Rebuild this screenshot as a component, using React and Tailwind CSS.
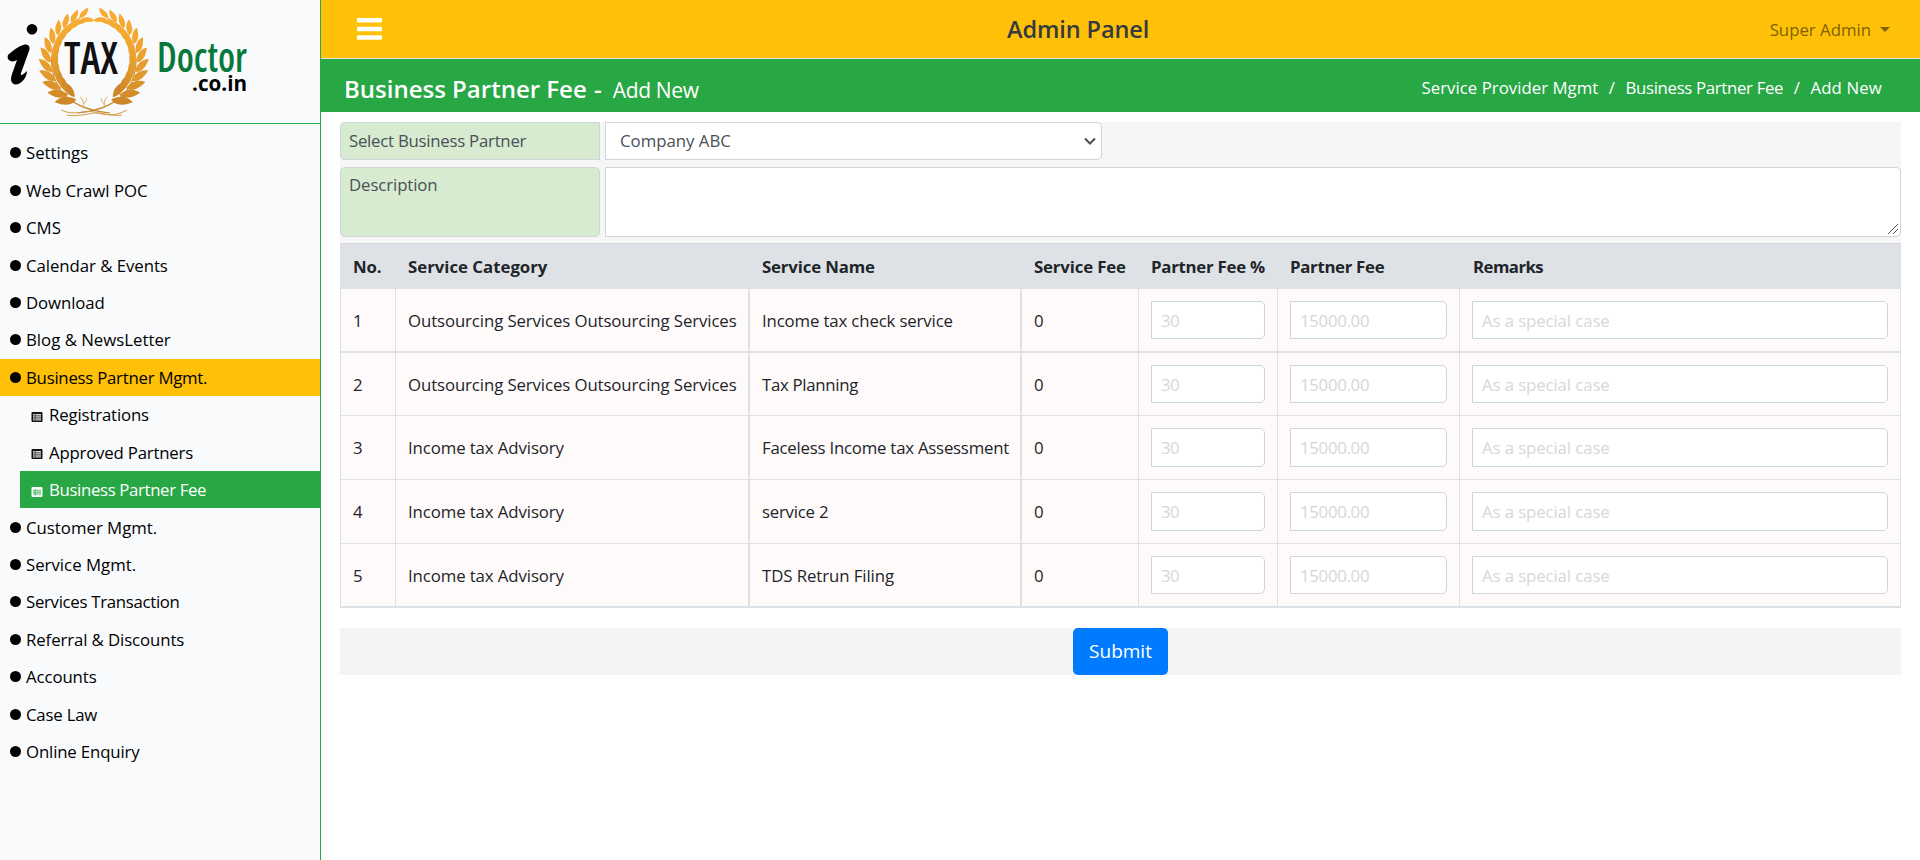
import React from "react";

const MENU = [
  { label: "Settings" },
  { label: "Web Crawl POC", fit: "tracking-[0px]" },
  { label: "CMS" },
  { label: "Calendar & Events", fit: "tracking-[-0.05px]" },
  { label: "Download", fit: "tracking-[-0.1px]" },
  { label: "Blog & NewsLetter" },
  {
    label: "Business Partner Mgmt.",
    fit: "tracking-[-0.25px]",
    open: true,
    children: [
      { label: "Registrations", fit: "tracking-[-0.15px]" },
      { label: "Approved Partners", fit: "tracking-[-0.2px]" },
      { label: "Business Partner Fee", fit: "tracking-[-0.35px]", active: true },
    ],
  },
  { label: "Customer Mgmt." },
  { label: "Service Mgmt." },
  { label: "Services Transaction", fit: "tracking-[-0.3px]" },
  { label: "Referral & Discounts", fit: "tracking-[-0.1px]" },
  { label: "Accounts", fit: "tracking-[-0.1px]" },
  { label: "Case Law", fit: "tracking-[-0.2px]" },
  { label: "Online Enquiry", fit: "tracking-[-0.15px]" },
];

const ROWS = [
  { category: "Outsourcing Services Outsourcing Services", name: "Income tax check service", fit: "tracking-[-0.14px]", row: "h-16 border-b-2", input: "h-[38px]" },
  { category: "Outsourcing Services Outsourcing Services", name: "Tax Planning", fit: "tracking-[-0.3px]", row: "h-[63px] border-b", input: "h-[38px]" },
  { category: "Income tax Advisory", name: "Faceless Income tax Assessment", fit: "tracking-[-0.22px]", row: "h-16 border-b", input: "h-[39px]" },
  { category: "Income tax Advisory", name: "service 2", fit: "tracking-[-0.22px]", row: "h-16 border-b", input: "h-[39px]" },
  { category: "Income tax Advisory", name: "TDS Retrun Filing", fit: "tracking-[-0.08px]", row: "h-16 border-b-2", input: "h-[38px]" },
];

const GRID = "grid grid-cols-[56px_354px_272px_117px_139px_182px_441px]";

/* Leaves of one laurel branch, from the foot of the wreath up to its tip. */
const LEAF_COLORS = ["#cd8726", "#d38c28", "#da922a", "#e1982c", "#e79d2d", "#eca12e", "#f0a42f", "#f3a730", "#f5a931", "#f6aa32", "#f7ab33", "#f8ac34"];
const LEAVES = LEAF_COLORS.map((color, i) => {
  const t = i / (LEAF_COLORS.length - 1);
  const a = ((114 + t * 137) * Math.PI) / 180;
  return {
    x: 93.5 + 42 * Math.cos(a),
    y: 59.5 + 43 * Math.sin(a),
    dir: (Math.atan2(43 * Math.cos(a), -42 * Math.sin(a)) * 180) / Math.PI,
    s: 1.15 - t * 0.42,
    color,
  };
});

function Branch() {
  return (
    <g>
      <path d="M110 113C88 111 68 103 59 88C46 66 48 34 80 18" fill="none" stroke="url(#gold)" strokeWidth="1.2" />
      {LEAVES.map((l, i) => (
        <g key={i} transform={`translate(${l.x} ${l.y}) rotate(${l.dir}) scale(${l.s})`} fill={l.color}>
          <path d="M0 -0.500C0 -6 6 -10 16 -10.500C14 -4 8 0 0 -0.500Z" />
          <path d="M2 0.500C4 6 9 9.500 18 9C16 3 9 -0.500 2 0.500Z" />
        </g>
      ))}
      <path d="M83 108C84 103 83 99 80 97M83 104C86 102 87 100 86 98" fill="none" stroke="#dba75a" strokeWidth="1" />
    </g>
  );
}

function Logo() {
  return (
    <svg width="260" height="123" viewBox="0 0 260 123" className="block">
      <defs>
        <linearGradient id="gold" x1="0" y1="0" x2="0" y2="120" gradientUnits="userSpaceOnUse">
          <stop offset="0" stopColor="#fbb034" />
          <stop offset="1" stopColor="#bf7f26" />
        </linearGradient>
      </defs>
      <Branch />
      <g transform="translate(187.500 0) scale(-1 1)">
        <Branch />
      </g>
      <path d="M61 110C76 117 84 109 94 112S114 117 127 110M67 115C78 117 86 114 94 113S112 117 122 115" fill="none" stroke="#d39a48" strokeWidth="1" />
      <circle cx="32" cy="29.300" r="5.300" />
      <path d="M9 54C14 50 20 45 25 44.500C29 44.500 30.500 47 29 51L21 73C20 76 22 76 27 71C27 77 22 84 16 84.500C11 84 10 80 12 74L17 60C14 62 10 62 8 59C7 56 8 55 9 54Z" />
      <text x="64" y="73.500" className="font-semibold [font-stretch:75%]" fontSize="45" textLength="54" lengthAdjust="spacingAndGlyphs" fill="#111">TAX</text>
      <text x="157" y="72" className="font-semibold [font-stretch:75%]" fontSize="42" textLength="90" lengthAdjust="spacingAndGlyphs" fill="#08783c">Doctor</text>
      <text x="192" y="91" className="font-bold" fontSize="22" textLength="55" lengthAdjust="spacingAndGlyphs">.co.in</text>
    </svg>
  );
}

function ListIcon({ active }) {
  return (
    <svg width="12" height="10" viewBox="0 0 12 10" className="mt-1 mr-[6px] shrink-0">
      <rect x="0.500" width="11" height="10" rx="1" fill={active ? "#fff" : "#111"} />
      <rect x="2" y="2" width="8" height="6.500" fill={active ? "#d5efdb" : "#d6d3ce"} />
      <path d="M2 3.700h8M2 5.300h8M2 7h8M4.200 2v6.500" stroke={active ? "#28a745" : "#222"} strokeWidth="0.600" />
    </svg>
  );
}

function Sidebar() {
  return (
    <aside className="flex h-[860px] w-[321px] shrink-0 flex-col border-r border-[#28a745] bg-[#f8fafc] text-black">
      <div className="h-[124px] border-b border-[#28a745]">
        <Logo />
      </div>
      <nav className="mt-[10px] text-[16.800px]">
        {MENU.map((item) => (
          <div key={item.label}>
            <a className={`flex h-[37.450px] items-center pl-[10px] ${item.open ? "bg-[#ffc107]" : ""}`}>
              <span className="mr-[5px] size-[11px] rounded-full bg-black" />
              <span className={item.fit}>{item.label}</span>
            </a>
            {item.children?.map((child) => (
              <a
                key={child.label}
                className={`ml-5 flex h-[37.450px] items-center pl-[11px] ${child.active ? "bg-[#28a745] text-white" : ""}`}
              >
                <ListIcon active={child.active} />
                <span className={child.fit}>{child.label}</span>
              </a>
            ))}
          </div>
        ))}
      </nav>
    </aside>
  );
}

function Field({ text, size }) {
  return (
    <div className={`flex items-center rounded-r-[5px] border border-[#ced4da] bg-white pl-[9px] text-[#d5d7da] ${size}`}>
      {text}
    </div>
  );
}

function FeeTable() {
  const cell = "flex items-center pl-3";
  return (
    <div className="text-[16.800px] whitespace-nowrap text-[#212529]">
      <div className={`${GRID} h-[46px] border-t border-[#d3d7dc] bg-[#dee2e6] font-bold`}>
        <div className="flex items-center pl-[13px] tracking-[-0.2px]">No.</div>
        <div className={cell}>Service Category</div>
        <div className={`${cell} tracking-[-0.15px]`}>Service Name</div>
        <div className={`${cell} tracking-[-0.15px]`}>Service Fee</div>
        <div className={`${cell} tracking-[-0.25px]`}>Partner Fee %</div>
        <div className={`${cell} tracking-[-0.3px]`}>Partner Fee</div>
        <div className="flex items-center pl-[13px] tracking-[-0.55px]">Remarks</div>
      </div>
      {ROWS.map((r, i) => (
        <div key={i} className={`${GRID} border-[#dee2e6] bg-[#fffafa] ${r.row}`}>
          <div className="flex items-center border-x border-[#dee2e6] pl-3">{i + 1}</div>
          <div className="flex items-center border-r-2 border-[#dee2e6] pl-3 tracking-[-0.1px]">{r.category}</div>
          <div className={`flex items-center border-r-2 border-[#dee2e6] pl-3 ${r.fit}`}>{r.name}</div>
          <div className="flex items-center border-r border-[#dee2e6] pl-3">0</div>
          <div className="border-r border-[#dee2e6] pt-3 pl-3 tracking-[-0.5px]"><Field text="30" size={`w-[114px] ${r.input}`} /></div>
          <div className="border-r border-[#dee2e6] pt-3 pl-3 tracking-[-0.3px]"><Field text="15000.00" size={`w-[157px] ${r.input}`} /></div>
          <div className="border-r border-[#dee2e6] pt-3 pl-3 tracking-[-0.1px]"><Field text="As a special case" size={`w-[416px] ${r.input}`} /></div>
        </div>
      ))}
    </div>
  );
}

export default function App() {
  return (
    <div className="flex h-[860px] w-[1920px] overflow-hidden bg-white font-['Open_Sans','Noto_Sans',sans-serif] leading-[27px] font-normal">
      <Sidebar />
      <div className="flex-1">
        <header className="flex h-[59px] items-center border-b border-[#dee2e6] bg-[#ffc107] pr-[30px] pl-9">
          <div className="w-[650px]">
            <svg width="25" height="22" viewBox="0 0 25 22" className="block" fill="#fff">
              <rect y="0" width="25" height="4.500" rx="0.800" />
              <rect y="8.700" width="25" height="4.500" rx="0.800" />
              <rect y="17.200" width="25" height="4.500" rx="0.800" />
            </svg>
          </div>
          <h1 className="pt-px text-[23.500px] font-semibold tracking-[-0.1px] text-[#343a40]">Admin Panel</h1>
          <div className="ml-auto flex items-center text-[16.800px] text-[#806104]">
            <span>Super Admin</span>
            <span className="ml-[9px] border-x-[5.500px] border-t-[5.500px] border-x-transparent border-t-[#806104]" />
          </div>
        </header>
        <div className="flex h-[53px] items-center justify-between bg-[#28a745] pr-[38px] pl-[23px] pt-1 text-white">
          <div className="flex items-baseline pt-1">
            <h2 className="text-[24px] font-semibold">Business Partner Fee <span className="ml-px">-</span></h2>
            <span className="ml-[11px] text-[21px] tracking-[-0.35px]">Add New</span>
          </div>
          <div className="flex gap-[10.500px] text-[16.800px]">
            <span className="tracking-[0.03px]">Service Provider Mgmt</span>
            <span>/</span>
            <span className="tracking-[-0.32px]">Business Partner Fee</span>
            <span>/</span>
            <span className="tracking-[0.15px]">Add New</span>
          </div>
        </div>
        <main className="px-[19px] pt-[10px] text-[16.800px] text-[#495057]">
          <div className="flex h-[121px] flex-col gap-[7px] bg-[#f6f6f6]">
            <div className="flex h-[38px] gap-[5px]">
              <div className="flex w-[260px] items-center rounded-l-[5px] border border-[#ced4da] bg-[#d7ebd0] pb-[2px] pl-2 tracking-[-0.25px]">Select Business Partner</div>
              <div className="flex w-[497px] items-center justify-between rounded-r-[5px] border border-[#ced4da] bg-white pr-[5px] pl-[14px]">
                <span className="pb-[2px]">Company ABC</span>
                <svg width="12" height="8" viewBox="0 0 12 8" fill="none" stroke="#4c4f52" strokeWidth="2"><path d="M1 1.500L6 6.500L11 1.500" /></svg>
              </div>
            </div>
            <div className="flex h-[70px] gap-[5px]">
              <div className="w-[260px] rounded-[5px] border border-[#ced4da] bg-[#d7ebd0] pt-[3px] pl-2 tracking-[-0.1px]">Description</div>
              <div className="flex flex-1 items-end justify-end rounded-r-[5px] border border-[#ced4da] bg-white p-[2px]">
                <svg width="10" height="10" viewBox="0 0 10 10" stroke="#555" strokeWidth="1"><path d="M0 10L10 0M5 10L10 5" /></svg>
              </div>
            </div>
          </div>
          <FeeTable />
          <div className="mt-5 flex h-[47px] justify-center bg-[#f4f4f4]">
            <button className="h-[47px] w-[95px] rounded-[5px] bg-[#007bff] text-[19px] text-white">Submit</button>
          </div>
        </main>
      </div>
    </div>
  );
}
